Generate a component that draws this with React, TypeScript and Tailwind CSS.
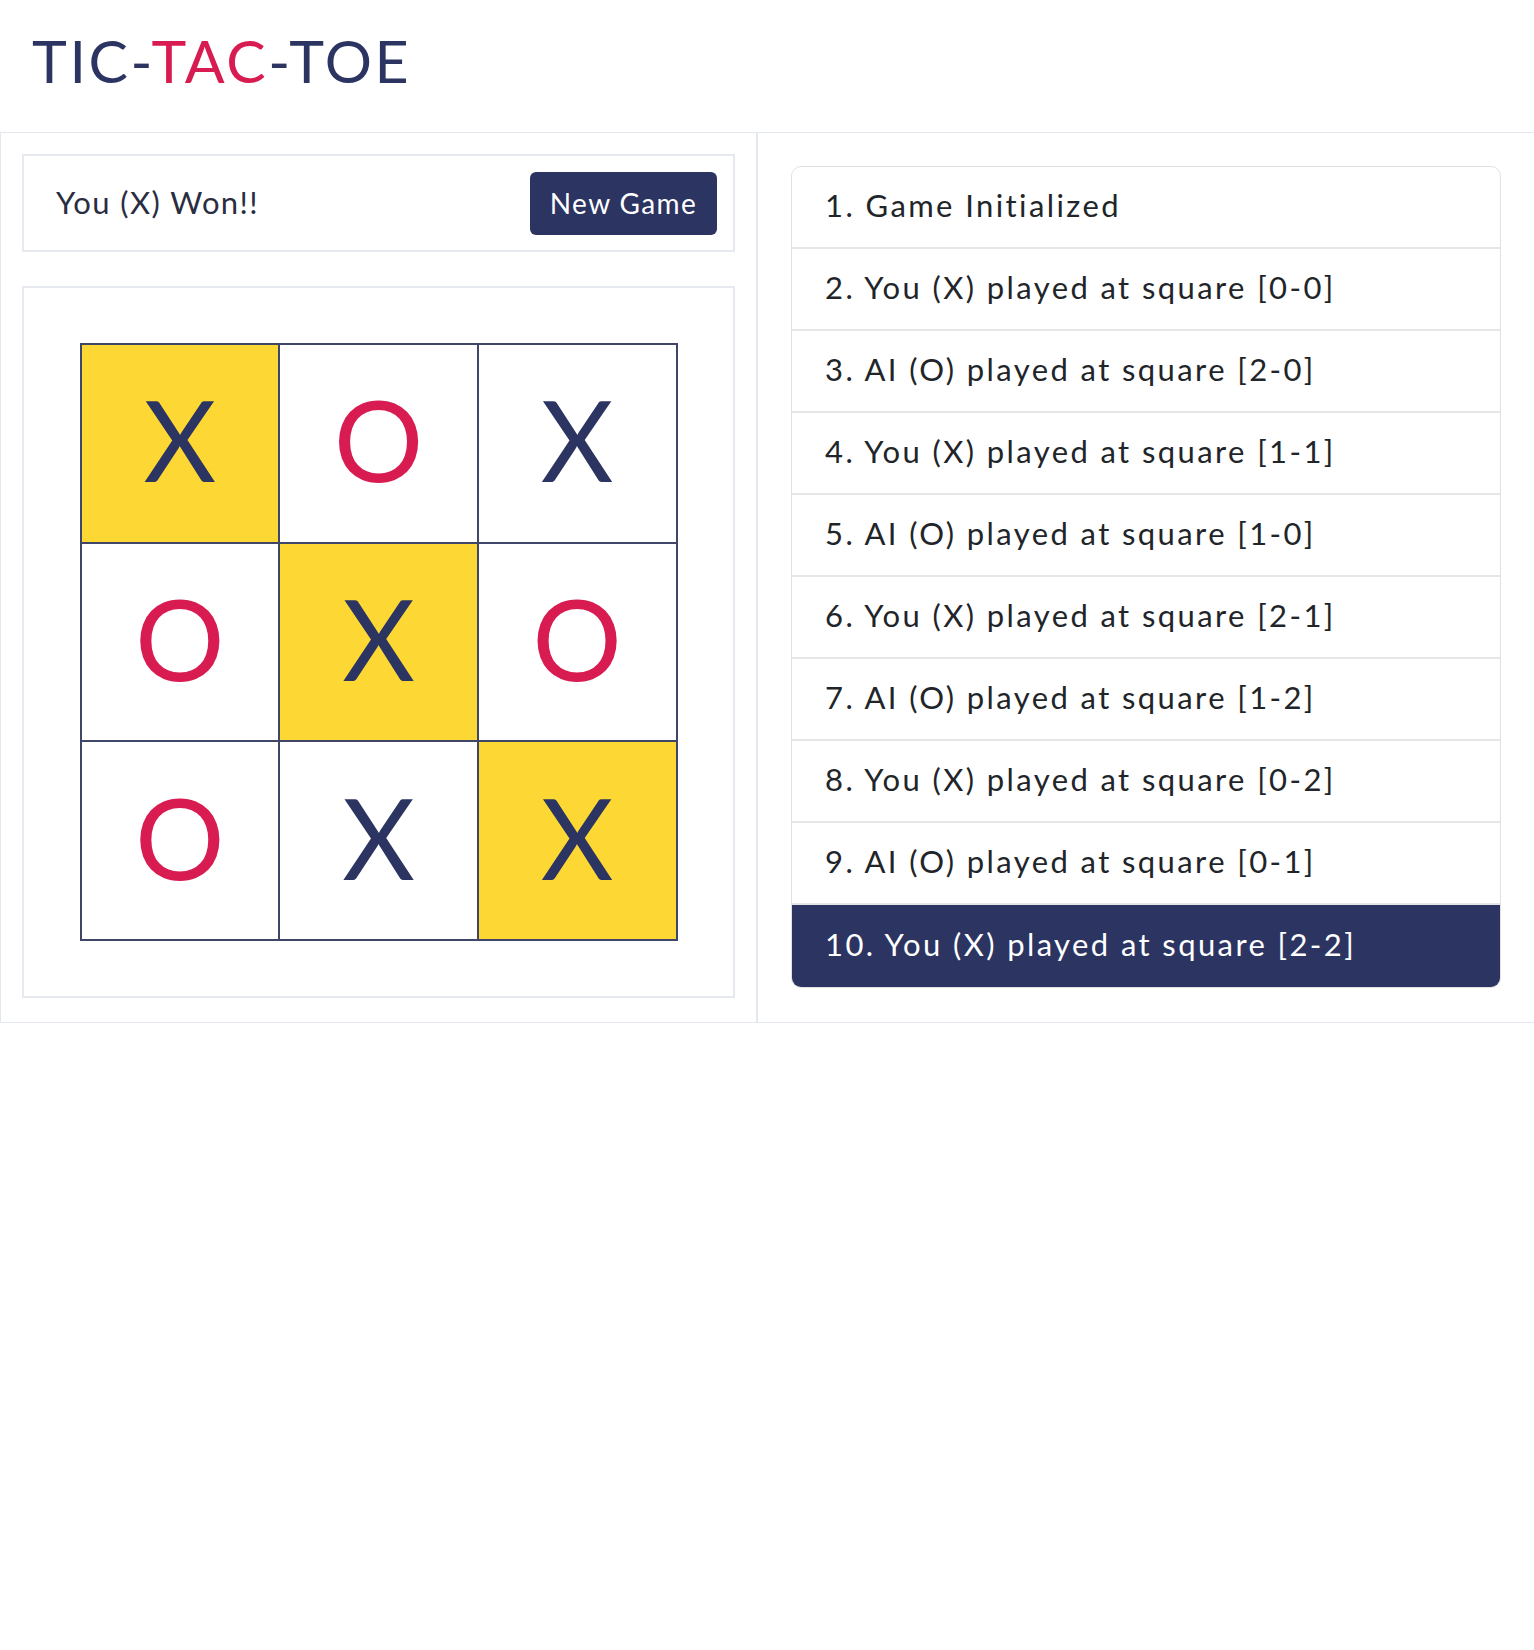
import React from "react";

const board: { v: string; win: boolean }[] = [
  { v: "X", win: true },
  { v: "O", win: false },
  { v: "X", win: false },
  { v: "O", win: false },
  { v: "X", win: true },
  { v: "O", win: false },
  { v: "O", win: false },
  { v: "X", win: false },
  { v: "X", win: true },
];

const moves = [
  "1. Game Initialized",
  "2. You (X) played at square [0-0]",
  "3. AI (O) played at square [2-0]",
  "4. You (X) played at square [1-1]",
  "5. AI (O) played at square [1-0]",
  "6. You (X) played at square [2-1]",
  "7. AI (O) played at square [1-2]",
  "8. You (X) played at square [0-2]",
  "9. AI (O) played at square [0-1]",
  "10. You (X) played at square [2-2]",
];

export default function App() {
  return (
    <div className="min-h-[1650px] bg-white text-[#212529]" style={{ fontFamily: "Lato, 'Noto Sans', sans-serif" }}>
      <header className="h-[133px] flex items-center pl-[32px] border-b border-[#e3e7ee]">
        <h1 className="text-[59px] leading-none font-normal text-[#2c3462] tracking-[2.6px] mt-[-12px]">
          TIC-<span className="text-[#d81b50]">TAC</span>-TOE
        </h1>
      </header>
      <div className="grid grid-cols-[757px_1fr] border-b border-[#e3e7ee]">
        <div className="border-l border-r border-[#e3e7ee] p-[21px] pb-[24px] flex flex-col gap-[34px]">
          <div className="h-[98px] border-2 border-[#e6e9ef] flex items-center justify-between pl-[32px] pr-[16px]">
            <span className="text-[31px] font-normal tracking-[1.4px] text-[#2a2d40] mt-[-2px]">You (X) Won!!</span>
            <button className="h-[63px] w-[187px] rounded-[6px] bg-[#2c3462] text-white text-[28px] tracking-[1.4px]">New Game</button>
          </div>
          <div className="border-2 border-[#e6e9ef] p-[55px] flex justify-center">
            <div className="grid grid-cols-3 w-[598px] h-[598px] border border-[#3f4667]">
              {board.map((c, i) => (
                <div
                  key={i}
                  className={`border border-[#3f4667] flex items-center justify-center ${c.win ? "bg-[#fdd835]" : "bg-white"}`}
                >
                  <span
                    className={`text-[112px] leading-none font-normal mt-[-8px] ${c.v === "X" ? "text-[#2c3462]" : "text-[#d81b50]"}`}
                  >
                    {c.v}
                  </span>
                </div>
              ))}
            </div>
          </div>
        </div>
        <div className="border-l border-[#e3e7ee] p-[33px] pb-[20px]">
          <ul className="rounded-[10px] border border-[#e2e2e2] overflow-hidden">
            {moves.map((m, i) => {
              const active = i === moves.length - 1;
              return (
                <li
                  key={i}
                  className={`h-[82px] flex items-center pl-[33px] pb-[4px] text-[31px] font-normal tracking-[2.4px] ${
                    active ? "bg-[#2c3462] text-white" : "border-b-2 border-[#e6e6e6] text-[#212529]"
                  }`}
                >
                  {m}
                </li>
              );
            })}
          </ul>
        </div>
      </div>
    </div>
  );
}
